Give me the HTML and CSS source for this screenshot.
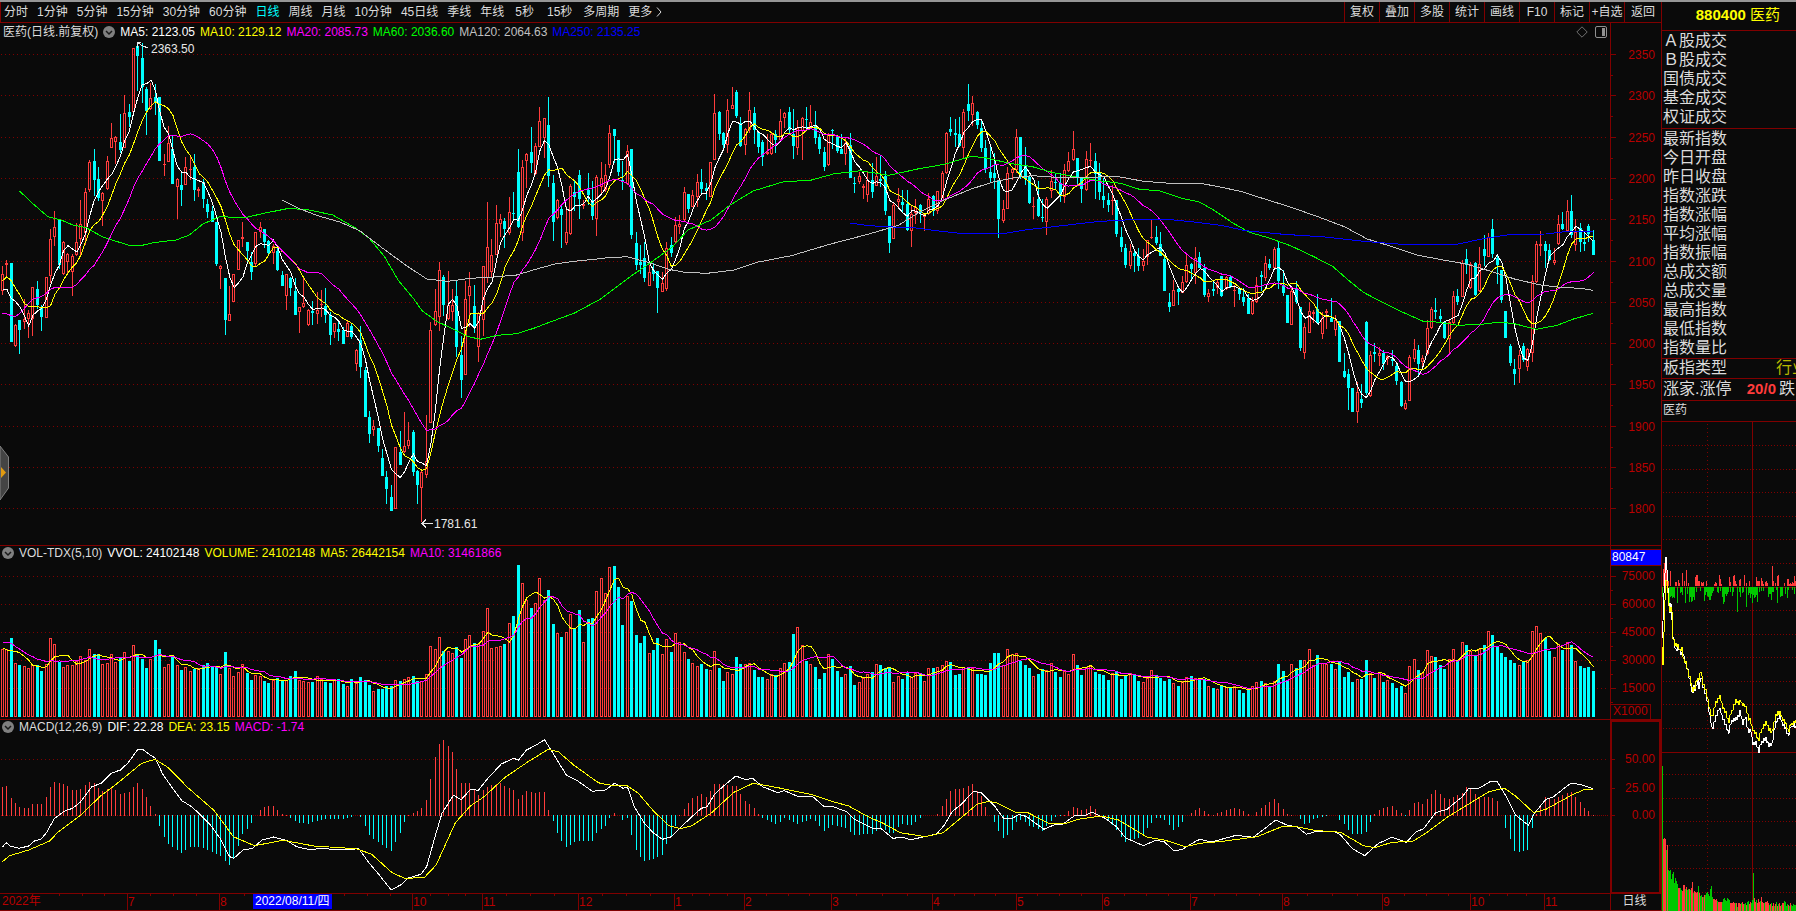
FILE: index.html
```html
<!DOCTYPE html>
<html lang="zh-CN">
<head>
<meta charset="utf-8">
<title>880400 医药</title>
<link rel="stylesheet" href="styles.css">
</head>
<body>
<div class="app">
  <main class="left">
    <header class="toolbar">
      <nav class="periods" aria-label="周期">
        <button>分时</button><button>1分钟</button><button>5分钟</button><button>15分钟</button><button>30分钟</button><button>60分钟</button><button class="active">日线</button><button>周线</button><button>月线</button><button>10分钟</button><button>45日线</button><button>季线</button><button>年线</button><button class="wide">5秒</button><button class="wide">15秒</button><button>多周期</button><button class="more">更多<svg width="6" height="10" viewBox="0 0 6 10"><path d="M1 0.5L5 5L1 9.5" fill="none" stroke="currentColor"/></svg></button>
      </nav>
      <div class="tools">
        <button>复权</button><button>叠加</button><button>多股</button><button>统计</button><button>画线</button><button>F10</button><button>标记</button><button>+自选</button><button>返回</button>
      </div>
    </header>
    <div class="charts">
      <section class="panel price">
        <div class="legend tall">
          <span>医药(日线.前复权)</span>
          <button class="drop" aria-label="指标菜单"><svg width="12" height="12" viewBox="0 0 12 12"><circle cx="6" cy="6" r="6" fill="#808080"/><path d="M3 5L6 8L9 5" fill="none" stroke="#1a1a1a" stroke-width="1.5"/></svg></button>
          <span class="white">MA5: 2123.05</span><span class="yellow">MA10: 2129.12</span><span class="magenta">MA20: 2085.73</span><span class="green">MA60: 2036.60</span><span class="grey">MA120: 2064.63</span><span class="blue">MA250: 2135.25</span>
          <span class="corner">
            <svg width="12" height="12" viewBox="0 0 12 12"><path d="M6 0.8L11.2 6L6 11.2L0.8 6Z" fill="none" stroke="#707070"/></svg>
            <svg width="12" height="12" viewBox="0 0 12 12"><rect x="0.5" y="0.5" width="11" height="11" rx="1.5" fill="none" stroke="#909090"/><rect x="7" y="2" width="3" height="8" fill="#909090"/></svg>
          </span>
        </div>
        <svg class="plot" id="price" viewBox="0 41 1610 504" preserveAspectRatio="none"></svg>
      </section>
      <div class="axis"><svg class="plot" id="priceAxis" viewBox="1611 23 50 522" preserveAspectRatio="none"></svg></div>

      <section class="panel">
        <div class="legend sub">
          <button class="drop" aria-label="指标菜单"><svg width="12" height="12" viewBox="0 0 12 12"><circle cx="6" cy="6" r="6" fill="#808080"/><path d="M3 5L6 8L9 5" fill="none" stroke="#1a1a1a" stroke-width="1.5"/></svg></button>
          <span>VOL-TDX(5,10)</span><span class="white">VVOL: 24102148</span><span class="yellow">VOLUME: 24102148</span><span class="yellow">MA5: 26442154</span><span class="magenta">MA10: 31461866</span>
        </div>
        <svg class="plot" id="volume" viewBox="0 562 1610 157" preserveAspectRatio="none"></svg>
      </section>
      <div class="axis"><svg class="plot" id="volumeAxis" viewBox="1611 546 50 173" preserveAspectRatio="none"></svg></div>

      <section class="panel">
        <div class="legend sub">
          <button class="drop" aria-label="指标菜单"><svg width="12" height="12" viewBox="0 0 12 12"><circle cx="6" cy="6" r="6" fill="#808080"/><path d="M3 5L6 8L9 5" fill="none" stroke="#1a1a1a" stroke-width="1.5"/></svg></button>
          <span>MACD(12,26,9)</span><span class="white">DIF: 22.28</span><span class="yellow">DEA: 23.15</span><span class="magenta">MACD: -1.74</span>
        </div>
        <svg class="plot" id="macd" viewBox="0 736 1610 157" preserveAspectRatio="none"></svg>
      </section>
      <div class="axis boxed"><svg class="plot" id="macdAxis" viewBox="1612 722 47 170" preserveAspectRatio="none"></svg></div>

      <div class="time"><svg class="plot" id="time" viewBox="0 894 1610 16" preserveAspectRatio="none"></svg></div>
      <div class="axis unit">日线</div>
    </div>
    <button class="handle" aria-label="展开"><svg width="10" height="54" viewBox="0 0 10 54"><path d="M0 0L8.500 11V42L0 54Z" fill="#444" stroke="#808080"/><path d="M1 21L6 26.500L1 32Z" fill="#e09a10"/></svg></button>
  </main>

  <aside class="side">
    <h1><b>880400</b> 医药</h1>
    <ul class="group first"><li>Ａ股成交</li><li>Ｂ股成交</li><li>国债成交</li><li>基金成交</li><li>权证成交</li></ul>
    <ul class="group"><li>最新指数</li><li>今日开盘</li><li>昨日收盘</li><li>指数涨跌</li><li>指数涨幅</li><li>平均涨幅</li><li>指数振幅</li><li>总成交额</li><li>总成交量</li><li>最高指数</li><li>最低指数</li><li>指数量比</li></ul>
    <div class="row kind"><span>板指类型</span><span class="industry">行业</span></div>
    <div class="row count"><span>涨家.涨停</span><b>20/0</b><span>跌</span></div>
    <div class="row name">医药</div>
    <svg class="plot" id="intraday" viewBox="1662 422 134 489" preserveAspectRatio="none"></svg>
  </aside>
</div>
<script src="script.js"></script>
</body>
</html>
```

FILE: styles.css
```css
* { box-sizing: border-box; }

body {
  margin: 0;
  height: 100vh;
  overflow: hidden;
  background: #0a0a0a;
  color: #dcdcdc;
  font: 12px/16px "Liberation Sans", "Noto Sans CJK SC", sans-serif;
}

button {
  margin: 0;
  padding: 0;
  border: 0;
  background: none;
  color: inherit;
  font: inherit;
  white-space: nowrap;
}

svg { display: block; }

.app {
  display: grid;
  grid-template-columns: minmax(0, 1fr) 135px;
  height: 100vh;
  border-top: 2px solid #969696;
}

.left {
  position: relative;
  display: flex;
  flex-direction: column;
  min-height: 0;
}

.toolbar {
  display: flex;
  justify-content: space-between;
  height: 21px;
  border-bottom: 1px solid #800000;
  border-left: 1px solid #800000;
}

.periods {
  display: flex;
  align-items: center;
  gap: 9px;
  padding-left: 3px;
}

.periods .active { color: #00ffff; }
.periods .wide { padding: 0 2px; }
.periods .more { display: flex; align-items: center; gap: 4px; }

.tools { display: flex; }
.tools button {
  width: 35px;
  border-left: 1px solid #800000;
}
.tools button:last-child { width: 37px; }

.charts {
  flex: 1;
  min-height: 0;
  display: grid;
  grid-template-columns: minmax(0, 1fr) 51px;
  grid-template-rows: 523fr 174fr 174fr 17px;
}

.panel {
  display: flex;
  flex-direction: column;
  min-height: 0;
  border-bottom: 1px solid #800000;
}

.plot {
  flex: 1;
  width: 100%;
  height: 100%;
  min-height: 0;
  shape-rendering: crispEdges;
}

.legend {
  display: flex;
  align-items: center;
  gap: 5px;
  height: 16px;
  padding: 0 3px;
  white-space: nowrap;
}
.legend.tall { height: 18px; }
.legend.sub { padding: 0 2px 2px; line-height: 14px; }
.corner { display: flex; gap: 7px; margin-left: auto; }

.white { color: #ffffff; }
.yellow { color: #ffff00; }
.magenta { color: #ff00ff; }
.green { color: #00ff00; }
.grey { color: #c0c0c0; }
.blue { color: #0000ff; }

.axis {
  min-height: 0;
  border-left: 1px solid #800000;
  border-bottom: 1px solid #800000;
}
.axis.boxed { border: 2px solid #800000; }
.axis.unit { padding-right: 3px; line-height: 15px; text-align: center; }

.time { border-bottom: 1px solid #800000; }

.plot text { font: 12px "Liberation Sans", "Noto Sans CJK SC", sans-serif; }

.handle {
  position: absolute;
  left: 0;
  top: 48.8%;
}

.side {
  display: flex;
  flex-direction: column;
  min-width: 0;
  min-height: 0;
  overflow: hidden;
  border-left: 1px solid #800000;
  font-size: 16px;
  line-height: 19px;
}

.side h1 {
  margin: 0;
  height: 29px;
  padding: 3px 16px 0 0;
  border-bottom: 1px solid #800000;
  color: #ffff00;
  font-size: 15px;
  font-weight: 400;
  line-height: 20px;
  text-align: right;
  white-space: nowrap;
}

.group {
  margin: 0;
  padding: 0 1px 1px;
  border-bottom: 1px solid #800000;
  list-style: none;
}
.group.first { padding: 0 1px 2px; }

.row {
  display: flex;
  padding: 0 1px;
  border-bottom: 1px solid #800000;
  white-space: nowrap;
}
.kind { height: 20px; gap: 49px; line-height: 18px; }
.industry { color: #b8b800; }
.count { height: 22px; line-height: 20px; gap: 3px; }
.count b { margin-left: auto; color: #ff3c3c; font-size: 15px; }
.name { height: 21px; font-size: 12px; line-height: 18px; }
```

FILE: script.js
```js
// Vertical plot units are thirds of a pixel; prices are candle rows of
// direction + high, body top, body bottom, low.
const candles = `
u797 823 874 885,u780 790 796 830,d789 789 1025 1025,u972 976 1037 1041,d960 960 990 1062,u898 958 965 987,u930 940 956 1014,u862 862 958 1008,d844 867 915 927,d915 925 951 992,
u832 832 953 955,u688 718 829 850,u633 682 710 738,d658 658 794 806,u724 727 823 826,u758 763 787 818,u762 768 815 887,u668 726 765 768,u600 672 718 765,u565 577 700 735,
u480 487 570 575,d447 484 540 588,d500 537 594 603,u575 580 602 678,u468 484 568 570,u369 415 445 445,u408 412 425 492,d342 425 450 460,u285 340 445 445,d312 336 350 381,
u145 145 335 335,d128 138 168 273,d128 174 262 309,d262 267 332 405,u250 295 328 330,d253 290 307 346,d291 291 482 482,u462 493 494 527,u378 430 487 487,d408 448 552 552,
u535 537 560 657,d513 556 569 618,u471 500 554 554,u470 508 511 540,d462 500 570 603,u560 566 574 592,d537 545 597 625,d597 612 636 654,d618 633 666 666,d666 666 791 797,
u795 799 808 866,d834 834 960 1005,u858 942 962 962,u822 822 905 905,u720 720 809 809,u666 711 718 740,d726 726 752 788,d756 785 815 840,u696 696 791 797,u666 682 697 714,
d687 687 725 744,d720 723 760 765,u732 738 760 792,d744 752 810 812,d812 824 857 857,u822 822 888 930,d830 834 863 888,d833 874 944 944,u922 922 937 998,u835 909 920 923,
u927 929 975 979,d902 932 938 975,u877 930 943 972,u870 912 916 950,d865 917 944 968,d935 945 1005 1034,u970 970 995 1015,d967 987 995 1023,d980 989 1031 1031,u960 970 1012 1012,
d972 977 1012 1017,u1048 1050 1091 1113,d978 1020 1101 1134,d1100 1110 1250 1250,d1233 1250 1302 1329,u1260 1278 1290 1307,d1284 1284 1338 1356,d1347 1374 1428 1428,d1413 1431 1467 1512,d1455 1491 1533 1533,
u1341 1341 1526 1526,d1293 1355 1395 1395,u1236 1338 1356 1359,u1266 1321 1337 1347,d1290 1295 1416 1428,d1410 1413 1455 1512,u1413 1415 1463 1567,u1245 1382 1425 1433,u967 991 1268 1270,u868 933 976 979,
u785 810 952 992,d825 831 915 948,u814 916 957 961,u868 915 935 964,d842 888 1041 1070,d1008 1065 1140 1194,u843 898 1125 1125,u816 858 887 982,d855 918 985 1000,u935 940 1041 1085,
u798 799 960 1007,u606 742 835 850,u717 765 815 830,u615 668 765 765,u643 658 672 710,d654 663 686 744,u591 637 700 705,d576 638 643 660,d447 516 680 685,u480 500 698 723,
u460 461 482 565,d381 456 488 520,u430 438 522 525,u321 364 440 440,u355 355 415 474,d291 375 528 561,d525 549 665 723,u597 600 655 657,d617 627 645 744,u618 697 730 735,
u552 558 703 704,d540 576 590 633,d510 525 598 657,u600 613 618 627,d519 570 585 615,d543 600 648 660,u525 532 658 708,u486 535 560 580,u492 525 570 577,u375 400 496 504,
d387 388 407 490,d420 420 516 528,d483 540 546 570,u435 453 552 555,d447 447 705 717,d696 729 795 810,d735 785 795 822,d726 773 834 846,u795 816 857 857,d790 810 822 843,
d813 813 864 938,u816 850 875 875,u726 745 866 872,d711 736 759 771,u651 676 726 732,u645 673 682 702,u561 576 660 665,d582 582 627 640,u570 584 620 620,u522 546 592 620,
d507 546 567 582,d549 564 573 600,u487 487 590 592,u282 340 480 480,d333 336 402 420,d396 399 435 450,u297 330 434 460,u261 316 326 326,d270 276 348 354,d351 369 438 441,
u385 388 434 465,u276 330 390 400,d321 339 390 432,d396 396 441 459,d420 426 471 498,u403 455 463 465,u400 403 461 465,d390 402 420 460,u327 364 420 427,u336 338 353 384,
d321 336 390 402,d327 402 438 477,u360 384 443 465,u351 354 394 480,d321 357 358 384,u315 367 381 381,d333 376 414 432,d402 411 447 462,d441 456 501 513,u400 404 496 497,
d387 390 392 448,d405 408 453 459,d402 447 462 462,u410 430 462 495,d399 435 534 534,d530 549 550 579,u515 528 545 552,u552 558 563 597,u516 540 584 606,d489 541 575 595,
u471 528 557 557,d468 537 543 560,d513 528 632 645,d648 648 729 759,u610 616 716 716,u564 598 605 620,d570 606 615 640,d570 612 690 693,u616 643 692 741,u597 621 640 672,
d612 615 640 669,u640 643 650 692,u580 597 643 645,d585 588 633 648,u574 574 634 642,u514 520 603 603,u395 400 518 522,d351 387 397 408,d357 399 404 440,d351 402 438 441,
u327 337 443 473,d252 312 333 363,u288 310 346 377,d333 336 375 387,d360 384 444 455,d420 444 508 520,d438 516 534 549,d459 519 534 567,d540 540 657 714,u600 628 662 668,
u500 520 628 628,u503 508 520 540,u387 412 510 520,d411 411 528 537,d441 498 537 555,d528 531 609 612,u590 618 620 657,d543 597 648 650,d597 652 654 666,u592 597 665 705,
u509 544 574 594,d521 546 548 567,d519 549 588 606,u493 511 590 608,u457 484 512 516,u393 448 481 482,d473 475 530 553,d534 534 567 609,u453 477 571 572,u429 481 483 500,
d459 483 522 597,d489 516 576 600,d534 588 600 624,d580 600 615 636,u555 600 602 645,d600 600 702 711,d681 711 741 756,d732 744 795 804,u732 752 797 807,d750 758 768 816,
d744 768 798 813,u748 783 798 812,u720 720 772 795,u660 711 715 718,d678 711 729 735,d696 732 768 768,d770 777 873 873,d879 906 921 936,u840 870 917 917,d857 867 876 915,
u828 847 878 880,u764 796 847 849,d789 792 807 840,u741 774 818 852,d755 771 804 804,d793 803 885 890,u868 880 892 905,d840 867 874 887,u837 846 864 882,
d827 827 888 891,u828 832 868 870,d825 830 860 863,u855 871 873 920,d861 868 882 900,d864 891 906 918,d882 894 942 942,u890 903 941 945,u830 855 907 909,d813 826 831 873,
u768 790 835 843,d777 791 804 810,u742 746 805 810,d724 744 843 867,d810 855 880 888,d885 885 969 970,u865 872 974 974,d843 867 907 912,d921 921 1044 1053,u970 982 1058 1077,
u905 934 998 998,u929 935 941 968,d882 927 969 972,u935 953 1003 1018,u927 934 940 988,d895 955 966 966,u946 959 989 1008,d963 963 1086 1086,d1059 1113 1131 1134,d1107 1122 1164 1230,
d1164 1164 1236 1236,u1145 1175 1236 1269,d1152 1197 1210 1224,d963 965 1179 1185,u1053 1066 1188 1190,d1029 1056 1062 1085,u1042 1060 1067 1098,d1050 1059 1092 1110,u1065 1068 1077 1095,d1050 1077 1083 1098,
d1092 1098 1143 1155,d1143 1146 1218 1221,u1200 1210 1228 1230,u1065 1072 1202 1203,u1017 1046 1076 1086,d1035 1050 1092 1125,u1065 1075 1087 1100,u960 985 1063 1065,u920 927 985 987,d894 930 936 957,
d927 948 957 966,d963 966 1014 1018,u957 966 1017 1065,u873 889 970 972,d867 888 906 915,u780 790 892 892,d747 778 796 822,u785 793 865 866,d786 788 885 888,u742 793 872 876,
d705 748 767 797,u698 710 770 772,d657 687 762 774,d768 774 795 852,d810 810 900 908,d933 933 1014 1014,d1032 1038 1090 1098,d1077 1107 1122 1155,u1050 1066 1108 1148,d1029 1038 1080 1086,
u1043 1047 1100 1112,u825 844 1058 1086,u722 733 847 850,u693 732 738 768,d722 733 753 804,d732 750 780 783,u743 781 788 795,u645 671 733 735,d636 671 687 690,u600 633 694 696,
d585 633 704 715,u658 695 735 752,d669 684 725 756,d700 726 732 753,d672 678 702 725,d690 720 765 765`
  .split(",").map(s => s.trim()).map(s => ({ up: s[0] === "u", v: s.slice(1).split(" ").map(Number) }));

const volumes = `
328 328 294 370 375 379 385 376 376 393 373 294 313 365 382 376 376 363 349 360
328 342 342 373 370 343 367 352 337 363 316 344 357 384 358 300 327 382 373 346
376 390 382 394 387 385 376 369 379 382 403 336 385 409 397 373 400 420 406 409
423 429 420 414 423 420 408 393 420 423 427 426 409 417 426 429 420 417 432 439
417 430 411 420 435 454 447 447 438 438 421 423 418 412 408 423 424 403 319 328
292 333 334 340 321 354 298 286 309 312 274 205 325 322 319 312 250 228 75 130
181 204 190 115 181 150 252 280 291 277 223 264 210 307 237 234 154
115 160 82 79 141 255 169 183 285 309 288 340 330 294 343 298 336 280 307 337
357 370 379 372 387 391 334 384 423 397 403 351 372 373 370 390 411 411 418 403
405 385 370 366 282 262 316 363 373 381 417 399 343 357 393 411 403 378 435 427
414 403 396 373 375 384 381 427 409 417 396 412 400 400 424 385 384 382 376 364
366 405 402 382 382 385 402 402 405 369 339 339 376 328 343 340 363 375 384 409
402 387 391 370 396 411 394 403 343 375 405 382 378 396 402 405 420 400 393 417
405 400 402 423 427 414 391 405 414 423 417 430 438 424 412 408 415
416 418 439 444 448 438 440 445 437 450 459 448 439 427 423 430 439 424 372 393
420 373 384 360 361 328 376 345 370 372 372 388 366 411 396 426 418 417 360 400
414 400 426 421 429 444 438 460 379 358 390 400 331 349 351 375 387 358 328 363
307 315 334 346 328 315 274 285 321 339 351 360 369 376 366 360 274 259 280 294
333 352 313 330 307 315 364 378 384 381 393`.trim().split(/\s+/).map(Number);

// Slow curves: three stretches, each "x y" pairs with its own origin and scale.
const stretches = [[0, 2.6133], [600, 2.6133], [1200, 2.6309]];
const curve = (...parts) => parts.flatMap((p, n) => {
  const [x0, k] = stretches[n];
  return p.trim() ? p.trim().split(",").map(s => { const [x, y] = s.trim().split(" ").map(Number); return [x0 + x / k, y]; }) : [];
});

const ma60 = curve(
  "51 573,85 610,125 650,160 660,190 675,225 683,270 712,335 735,375 735,400 728,460 720,495 705,530 672,575 650,640 653,690 640,750 626,800 628,870 645,930 685,965 715,1005 770,1040 840,1080 895,1103 932,1140 963,1180 985,1225 1010,1255 1018,1300 1006,1350 1001,1395 985,1440 965,1500 940,1560 903",
  "0 898,50 855,85 825,130 790,190 740,230 690,290 660,340 615,400 573,480 545,550 541,610 522,680 512,755 526,830 507,900 493,970 469,1010 474,1070 490,1130 500,1180 517,1240 530,1310 543,1360 550,1410 568,1460 572,1520 595,1560 604",
  "0 607,40 633,85 668,130 697,180 713,240 738,300 770,350 800,390 840,430 877,480 907,530 935,585 963,620 966,680 976,740 973,790 966,830 972,885 988,940 976,980 958,1035 940");
const ma120 = curve(
  "738 601,780 625,830 647,890 667,940 692,1000 745,1060 795,1115 837,1170 844,1230 835,1290 831,1350 825,1400 808,1450 792,1500 784,1560 777",
  "0 775,70 770,120 785,180 808,220 817,280 820,350 810,410 787,500 767,600 733,700 703,780 676,830 640,900 600,970 567,1030 545,1090 532,1130 527,1190 532,1280 532,1350 529,1420 544,1490 550,1560 550",
  "0 550,50 560,110 575,170 597,240 622,310 650,380 680,440 717,500 738,570 765,640 780,700 792,760 812,830 838,900 856,950 862,1000 865,1035 871");
const ma250 = curve("",
  "653 669,690 675,740 680,820 683,880 692,940 700,1060 700,1110 690,1200 678,1290 666,1350 661,1420 658,1500 660,1560 667",
  "0 668,60 677,120 692,220 703,330 711,430 724,520 732,600 734,680 732,750 715,820 703,910 702,960 695,1035 694");
const dif = curve(
  "6 922,16 908,28 919,50 925,75 918,90 903,108 897,122 877,142 836,170 812,190 805,210 786,240 740,265 730,290 700,315 690,335 668,359 630,374 629,390 643,406 655,425 702,445 735,475 782,497 797,520 820,550 855,575 895,600 950,611 955,635 930,660 925,685 900,715 891,750 902,775 920,805 928,850 926,895 930,938 926,965 970,990 1003,1022 1050,1050 1033,1067 1014,1100 1003,1115 980,1138 885,1155 820,1185 766,1205 779,1230 748,1250 751,1275 715,1310 672,1342 655,1355 660,1376 630,1400 616,1423 599,1440 630,1480 705,1510 723,1548 754,1560 752",
  "0 752,14 750,38 730,60 745,72 742,90 800,116 850,139 878,163 898,187 890,210 863,240 830,265 805,280 800,300 762,323 738,355 708,378 718,400 716,425 740,465 758,482 752,516 769,555 769,586 800,610 800,644 815,665 838,712 865,735 866,765 895,790 892,812 899,848 890,880 882,900 855,920 815,945 792,975 755,995 757,1031 798,1055 835,1078 835,1095 823,1115 830,1160 868,1190 853,1210 852,1240 827,1265 828,1285 816,1320 835,1350 860,1373 893,1420 917,1454 900,1475 906,1500 932,1520 929,1545 912,1560 902",
  "0 898,30 906,95 886,140 892,165 870,200 840,230 856,255 860,280 883,300 876,355 875,370 885,400 925,433 947,470 910,505 892,543 907,567 877,588 866,620 818,650 808,690 770,707 745,730 747,765 724,783 726,806 770,830 825,864 856,880 820,910 778,930 770,975 730,1000 733,1035 746");
const dea = curve(
  "6 965,25 947,75 930,130 903,150 878,210 826,265 766,310 727,370 670,405 658,440 683,490 742,560 812,610 890,665 917,740 901,820 918,930 926,970 942,1025 998,1060 1016,1110 1011,1140 975,1190 848,1230 797,1265 770,1320 712,1380 665,1433 628,1460 636,1500 676,1560 725",
  "0 730,25 735,72 738,100 760,139 812,180 857,210 866,240 857,290 820,350 757,400 730,460 742,555 764,600 782,650 798,700 830,740 850,785 878,850 890,897 878,940 837,985 793,1015 784,1040 790,1085 817,1120 819,1170 849,1215 851,1250 838,1310 828,1355 840,1430 892,1475 900,1530 920,1560 912",
  "0 910,60 904,150 890,215 860,250 859,300 871,370 877,430 917,460 923,505 907,560 904,600 875,650 832,710 790,760 755,800 744,830 768,878 818,910 808,980 764,1010 749,1035 748");

const RED = "#ff3c3c", CYAN = "#00ffff", LINE = "#800000", AXIS = "#b80000";
const xAt = i => 2.3 + 4.371 * i;
const rect = (x, y, w, h, fill) => `<rect x="${x}" y="${y}" width="${w}" height="${h}" fill="${fill}"/>`;
const hollow = (x, y, w, h) => `<rect x="${x + 0.5}" y="${y + 0.5}" width="${w - 1}" height="${h - 1}" fill="none" stroke="${RED}"/>`;
const poly = (pts, color) => `<polyline fill="none" stroke="${color}" points="${pts.map(p => p[0].toFixed(1) + "," + p[1].toFixed(1)).join(" ")}"/>`;
const dots = (x1, y1, x2, y2, dash = "1 3") => `<line x1="${x1}" y1="${y1}" x2="${x2}" y2="${y2}" stroke="${LINE}" stroke-dasharray="${dash}"/>`;
const label = (x, y, t, fill, anchor = "start") => `<text x="${x}" y="${y}" fill="${fill}" text-anchor="${anchor}">${t}</text>`;
const put = (id, s) => { document.getElementById(id).innerHTML = s; };

const average = (values, n, lead) => values.map((_, i) =>
  i < n - 1 ? lead[i] : values.slice(i - n + 1, i + 1).reduce((a, b) => a + b) / n);
const series = (values, base) => values.map((v, i) => [xAt(i) + 0.2, base + v / 3]);
const sample = (pts, x) => {
  if (x <= pts[0][0]) return pts[0][1];
  for (let n = 1; n < pts.length; n++) {
    const [a, b] = [pts[n - 1], pts[n]];
    if (x <= b[0]) return a[1] + (b[1] - a[1]) * (x - a[0]) / (b[0] - a[0]);
  }
  return pts[pts.length - 1][1];
};

// Price
const priceRows = [[2350, 54], [2300, 95], [2250, 137], [2200, 178], [2150, 219], [2100, 261], [2050, 302], [2000, 343], [1950, 384], [1900, 426], [1850, 467], [1800, 508]];
let s = priceRows.map(r => dots(1, r[1] + 0.5, 1608, r[1] + 0.5)).join("");
candles.forEach((c, i) => {
  const x = Math.floor(xAt(i)), [h, t, b, l] = c.v.map(v => Math.round(v / 3));
  const body = Math.max(1, b - t);
  if (c.up) {
    if (t > h) s += rect(x, h, 1, t - h, RED);
    if (l > t + body) s += rect(x, t + body, 1, l - t - body, RED);
    s += body < 3 ? rect(x - 1, t, 3, body, RED) : hollow(x - 1, t, 3, body);
  } else {
    s += rect(x, h, 1, Math.max(1, l - h), CYAN) + rect(x - 1, t, 3, body, CYAN);
  }
});
const closes = candles.map(c => c.up ? c.v[1] : c.v[2]);
const scaled = pts => pts.map(p => [p[0], p[1] / 3]);
s += poly(series(average(closes, 5, [868, 868, 895, 905]), 0), "#ffffff");
s += poly(series(average(closes, 10, [842, 830, 842, 865, 885, 910, 920, 920, 920]), 0), "#ffff00");
s += poly(series(average(closes, 20, [940, 942, 947, 949, 940, 925, 910, 897, 893, 889, 880, 868, 862, 862, 862, 862, 862, 853, 838]), 0), "#ff00ff");
s += poly(scaled(ma60), "#00ff00") + poly(scaled(ma120), "#c0c0c0") + poly(scaled(ma250), "#0000ff");
s += `<path d="M137 48V42.500H141M138 43L143 46L148 48M421 523.500H433M426 519.500L422 523.500L426 527.500" fill="none" stroke="#e8e8e8"/>`;
s += label(151, 53, "2363.50", "#e8e8e8") + label(434, 528, "1781.61", "#e8e8e8");
put("price", s);

s = "";
priceRows.forEach((r, i) => {
  s += rect(1611, r[1], 5, 1, LINE) + label(1655, r[1] + 5, r[0], AXIS, "end");
  if (i < 11) s += rect(1611, r[1] + 21, 2, 1, LINE);
});
put("priceAxis", s);

// Volume
const volRows = [[75000, 576], [60000, 604], [45000, 632], [30000, 660], [15000, 688]];
s = volRows.map(r => dots(1, r[1] + 0.5, 1608, r[1] + 0.5)).join("");
volumes.forEach((v, i) => {
  const x = Math.floor(xAt(i)), y = 540 + Math.round(v / 3);
  s += candles[i].up ? hollow(x - 1, y, 3, 717 - y) : rect(x - 1, y, 3, 717 - y, CYAN);
});
s += poly(series(average(volumes, 5, [323, 330, 332, 334]), 540), "#ffff00");
s += poly(series(average(volumes, 10, [307, 307, 310, 320, 328, 337, 345, 350, 358]), 540), "#ff00ff");
put("volume", s);

s = rect(1611, 549, 50, 1, LINE) + rect(1611, 550, 50, 15, "#0000ff") + rect(1611, 565, 50, 1, LINE) + label(1612, 561, "80847", "#ffffff");
volRows.forEach(r => { s += rect(1611, r[1], 5, 1, LINE) + rect(1611, r[1] + 14, 2, 1, LINE) + label(1655, r[1] + 4, r[0], AXIS, "end"); });
s += `<path d="M1611 704.500H1650.500V719" fill="none" stroke="${LINE}"/>` + label(1613, 715, "X1000", AXIS);
put("volumeAxis", s);

// MACD
s = dots(1, 759.5, 1608, 759.5) + dots(1, 815.5, 1608, 815.5, "1 1");
candles.forEach((_, i) => {
  const at = xAt(i), x = Math.floor(at), d = Math.round(2 * (sample(dea, at) - sample(dif, at)) / 3);
  if (d > 0) s += rect(x, 816 - d, 1, d, RED);
  if (d < 0) s += rect(x, 815, 1, -d, CYAN);
});
const lowered = pts => pts.map(p => [p[0], 540 + p[1] / 3]);
s += poly(lowered(dif), "#ffffff") + poly(lowered(dea), "#ffff00");
put("macd", s);
put("macdAxis", [["50.00", 759], ["25.00", 788], ["0.00", 815]].map(r => rect(1611, r[1], 4, 1, LINE) + label(1655, r[1] + 4, r[0], AXIS, "end")).join(""));

// Time scale
s = label(2, 905, "2022年", AXIS);
[[127, 7], [219, 8], [412, 10], [482, 11], [578, 12], [674, 1], [744, 2], [831, 3], [932, 4], [1016, 5], [1102, 6], [1190, 7], [1282, 8], [1382, 9], [1470, 10], [1544, 11]]
  .forEach(m => { s += rect(m[0], 894, 1, 16, LINE) + label(m[0] + 1, 906, m[1], AXIS); });
[59, 82, 104, 150, 173, 196, 244, 344, 367, 390, 430, 448, 465, 506, 530, 554, 602, 626, 650, 692, 709, 727, 766, 788, 809, 856, 882, 907, 954, 974, 995, 1037, 1059, 1081, 1124, 1146, 1168, 1214, 1236, 1259, 1307, 1332, 1357, 1404, 1426, 1448, 1489, 1507, 1526]
  .forEach(x => { s += rect(x, 894, 1, 2, LINE); });
s += rect(253, 894, 79, 15, "#0000ff") + label(255, 905, "2022/08/11/四", "#ffffff");
put("time", s);

// Intraday panel
const ix = v => 1656 + v / 3, iy = v => 540 + v / 3;
s = [445, 469, 492, 516, 539, 563, 610, 634, 657, 681, 704, 728, 774, 798, 821, 845, 868, 892].map(y => dots(1663, y + 0.5, 1796, y + 0.5, "1 2")).join("");
s += dots(1707.5, 424, 1707.5, 911, "1 3") + rect(1752, 422, 1, 489, LINE) + rect(1662, 587, 134, 1, LINE) + rect(1662, 752, 134, 1, LINE);
const ticks = t => t.split(",").map(p => p.split(" ").map(Number));
ticks("22 50,25 68,28 60,31 80,34 30,37 15,43 45,58 12,61 12,67 18,70 10,79 40,85 15,91 48,97 8,118 28,121 34,124 34,127 16,130 14,136 12,139 8,142 12,151 16,175 6,178 12,181 10,190 34,193 22,196 6,220 28,223 12,232 30,235 34,238 16,241 6,250 18,253 20,265 34,271 8,280 16,301 26,304 14,307 16,310 14,316 24,319 14,322 6,328 12,331 16,334 10,349 60,352 14,358 10,364 30,367 32,385 8,394 20,397 22,400 6,403 10,406 6,409 12,412 10,415 30,418 14")
  .forEach(([x, h]) => { s += rect(Math.floor(ix(x)), 586 - Math.round(h / 3), 1, Math.round(h / 3), RED); });
ticks("18 30,40 60,43 30,46 26,49 34,52 30,55 34,64 48,73 18,76 16,79 24,88 48,94 20,100 45,103 30,106 45,109 42,112 30,115 38,121 14,133 12,145 42,148 24,151 16,154 28,157 30,160 40,163 38,166 28,169 18,172 12,184 14,187 18,193 12,199 30,202 50,205 46,208 22,211 26,214 20,217 14,223 16,229 26,232 14,244 74,250 16,253 30,259 18,262 16,271 60,277 24,280 18,283 34,286 22,289 48,292 24,295 32,298 30,301 24,304 46,310 14,316 12,322 12,337 30,340 22,343 20,346 38,349 16,352 16,361 10,364 48,373 30,376 28,379 26,388 22,394 34,397 10,409 10,415 22")
  .forEach(([x, h]) => { s += rect(Math.floor(ix(x)), 587, 1, Math.round(h / 3), "#00c800"); });
const wiggle = [0, 7, -5, 3, -8, 5, -2, 9, -6, 2];
const intraday = (t, color) => {
  const pts = ticks(t), out = [];
  for (let x = 18, n = 0; x <= 420; x += 3, n++) out.push([ix(x), iy(sample(pts, x) + (x > 50 ? wiggle[n % 10] : 0))]);
  return poly(out, color);
};
s += intraday("18 295,19 330,22 200,27 100,31 34,33 90,38 180,42 220,46 180,49 270,55 310,60 335,68 315,74 345,80 330,86 365,95 385,103 425,109 460,114 440,118 455,126 415,130 445,136 405,141 435,150 470,157 490,163 540,169 565,178 540,189 502,200 530,210 560,218 575,228 540,240 540,252 517,262 550,268 530,275 565,285 575,292 612,300 610,309 630,318 603,330 598,343 618,348 610,355 570,362 545,370 525,380 550,390 570,397 583,405 560,413 553,420 565", "#ffffff");
s += intraday("18 320,22 395,25 220,31 100,36 160,41 222,47 190,51 290,58 318,68 312,73 340,78 320,83 360,92 375,102 415,110 450,117 445,122 420,130 410,136 392,140 425,150 455,158 485,164 525,170 525,178 495,190 466,203 505,218 542,230 505,240 485,255 485,268 500,280 535,294 575,308 598,320 560,333 550,346 580,357 540,367 512,378 530,385 545,397 570,408 548,420 547", "#ffff00");
`g678 r897 r893 r897 g930 r915 g990 g993 g990 g1018 g1003 g997 g1030 g1015 g1022 g1033 r1043 r1043 g1043 g1050 r1053 r1035 r1035 g1048 r1042 g1050 g1048 r1046 g1050 r1045 r1026 g1060 r1053 r1055 r1060 r1055 g1038 r1060 g1067 g1065 r1071 g1071 r1065 g1064 g1058 g1056 g1062 g1068 g1046 g1038 g1070 r1077 r1077 r1079 r1078 g1083 r1086 r1086 r1086 r1087 g1085 g1077 g1074 g1080 g1082 g1075 g1077 g1080 r1088 r1090 r1089 r1087 r1090 g1088 r1090 g1100 r1090 r1088 r1092 g1089 r1087 r1092 g1091 g1090 r1095 g1086 g1083 r1092 r1086 g1090 g1080 g1000 r1075 r1085 g1080 r1088 r1078 r1086 g1083 r1072 r1086 r1088 g1090 r1086 r1086 r1083 r1090 g1095 r1093 g1090 r1098 r1088 g1098 r1093 g1087 r1098 g1092 r1090 r1098 g1096 r1090 r1090 g1083 g1087 g1098 g1092 r1096 g1099 r1090 g1094 g1099 g1092 g1095 g1096`
  .split(" ").forEach((b, n) => {
    const y = 540 + Math.round(Number(b.slice(1)) / 3);
    s += rect(1662 + n, y, 1, 911 - y, b[0] === "r" ? RED : "#00c800");
  });
put("intraday", s);
```
